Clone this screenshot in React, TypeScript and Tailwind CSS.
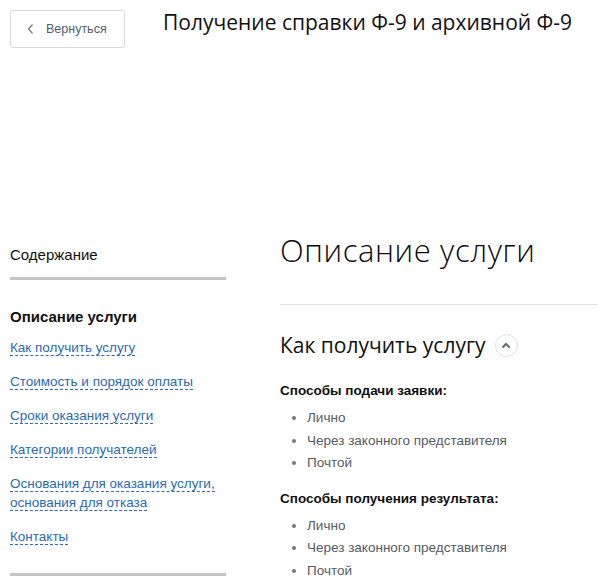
import React from "react";

const links = [
  "Как получить услугу",
  "Стоимость и порядок оплаты",
  "Сроки оказания услуги",
  "Категории получателей",
  "Основания для оказания услуги, основания для отказа",
  "Контакты",
];

function List({ items }: { items: string[] }) {
  return (
    <ul className="mt-[8px] flex flex-col pl-[27px] text-[13.5px] leading-[22.5px] text-[#555b63] list-disc marker:text-[#777]">
      {items.map((t) => (
        <li key={t}>{t}</li>
      ))}
    </ul>
  );
}

export default function App() {
  return (
    <div className="w-[598px] h-[587px] overflow-hidden bg-white" style={{ fontFamily: '"Liberation Sans", Arial, sans-serif' }}>
      <div className="flex items-start pt-[10px] pl-[10px]">
        <button className="flex h-[38px] w-[115px] items-center rounded-[3px] border border-[#d7d9dd] pl-[16px] text-[12.5px] text-[#52606d]">
          <svg width="8" height="12" viewBox="0 0 8 12" className="mr-[11px]">
            <path d="M5.5 1.5 L1.5 6 L5.5 10.5" fill="none" stroke="#6b7580" strokeWidth="1.2" />
          </svg>
          Вернуться
        </button>
        <h1 className="ml-[38px] mt-[-2px] text-[21px] leading-[28px] text-[#111]" style={{ fontFamily: '"Open Sans", sans-serif' }}>
          Получение справки Ф-9 и архивной Ф-9
        </h1>
      </div>

      <div className="mt-[184px] flex pl-[10px]">
        <aside className="w-[216px] shrink-0">
          <div className="pt-[14px] text-[15px] leading-[18px] text-[#111]">Содержание</div>
          <div className="mt-[13px] h-[3px] bg-[#c6c6ca]" />
          <div className="mt-[28px] text-[15px] font-bold leading-[18px] text-[#111]">Описание услуги</div>
          <div className="mt-[12px] flex flex-col gap-[15px] text-[13.5px] leading-[19px] text-[#2a6bb5]">
            {links.map((l) => (
              <div key={l}>
                <span className="border-b border-dashed border-[#2a6bb5]">{l}</span>
              </div>
            ))}
          </div>
          <div className="mt-[27px] h-[3px] bg-[#c6c6ca]" />
        </aside>

        <main className="ml-[54px] flex-1">
          <h2 className="text-[31px] font-light leading-[36px] text-[#0b0b0b] tracking-[0.6px]" style={{ fontFamily: '"Open Sans", sans-serif' }}>
            Описание услуги
          </h2>
          <div className="mt-[36px] h-px bg-[#e3e3e3]" />
          <div className="mt-[26px] flex items-center">
            <h3 className="text-[21px] leading-[28px] text-[#111]" style={{ fontFamily: '"Open Sans", sans-serif' }}>
              Как получить услугу
            </h3>
            <span className="ml-[9px] flex h-[23px] w-[23px] items-center justify-center rounded-full border border-[#dfe2e6]">
              <svg width="10" height="7" viewBox="0 0 10 7">
                <path d="M1.5 5.5 L5 2 L8.5 5.5" fill="none" stroke="#5f6b78" strokeWidth="2" />
              </svg>
            </span>
          </div>
          <div className="mt-[24px] text-[13.5px] font-bold leading-[16px] text-[#111]">Способы подачи заявки:</div>
          <List items={["Лично", "Через законного представителя", "Почтой"]} />
          <div className="mt-[16px] text-[13.5px] font-bold leading-[16px] text-[#111]">Способы получения результата:</div>
          <List items={["Лично", "Через законного представителя", "Почтой"]} />
        </main>
      </div>
    </div>
  );
}
